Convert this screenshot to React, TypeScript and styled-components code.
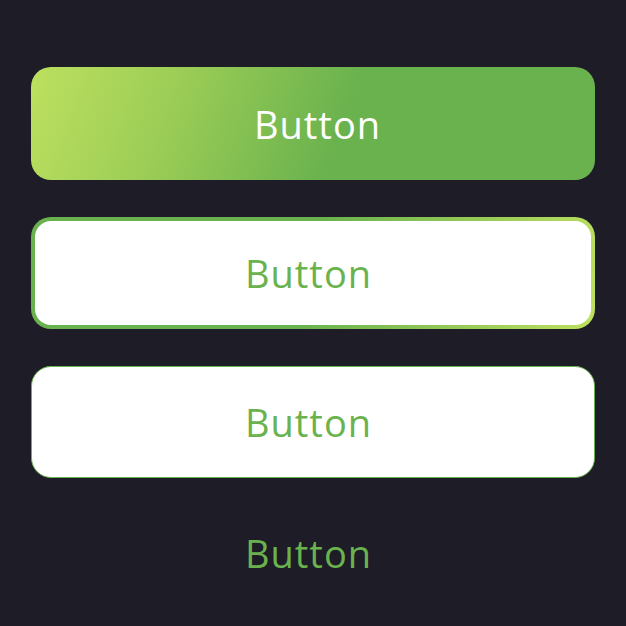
import React from "react";
import styled, { createGlobalStyle } from "styled-components";

const Global = createGlobalStyle`
  html, body { margin: 0; padding: 0; background: #1d1c27; }
  body { font-family: "Open Sans", "Noto Sans", sans-serif; }
`;

const Page = styled.div`
  width: 626px;
  height: 626px;
  box-sizing: border-box;
  padding: 67px 31px 0;
  display: flex;
  flex-direction: column;
  gap: 37px;
  background: #1d1c27;
`;

const Base = styled.button`
  box-sizing: border-box;
  width: 564px;
  height: 113px;
  border-radius: 20px;
  font-family: "Open Sans", "Noto Sans", sans-serif;
  font-size: 38px;
  letter-spacing: 1px;
  font-weight: 400;
  display: flex;
  align-items: center;
  justify-content: center;
  cursor: pointer;
  padding: 0 9px 0 0;
`;

const GradientButton = styled(Base)`
  border: none;
  color: #ffffff;
  padding: 0 0 0 9px;
  background: linear-gradient(110deg, #bde05f 0%, #9ccd56 25%, #6ab24e 55%, #6ab24e 100%);
`;

const GradientOutlineButton = styled(Base)`
  height: 112px;
  border: 4px solid transparent;
  color: #6ab24e;
  background:
    linear-gradient(#ffffff, #ffffff) padding-box,
    linear-gradient(100deg, #6ab24e 0%, #6ab24e 50%, #bde05f 100%) border-box;
`;

const OutlineButton = styled(Base)`
  height: 112px;
  border: 1px solid #6ab24e;
  background: #ffffff;
  color: #6ab24e;
`;

const TextButton = styled(Base)`
  height: 60px;
  margin-top: 8px;
  border: none;
  background: transparent;
  color: #6ab24e;
`;

export default function App() {
  return (
    <>
      <Global />
      <Page>
        <GradientButton>Button</GradientButton>
        <GradientOutlineButton>Button</GradientOutlineButton>
        <OutlineButton>Button</OutlineButton>
        <TextButton>Button</TextButton>
      </Page>
    </>
  );
}
